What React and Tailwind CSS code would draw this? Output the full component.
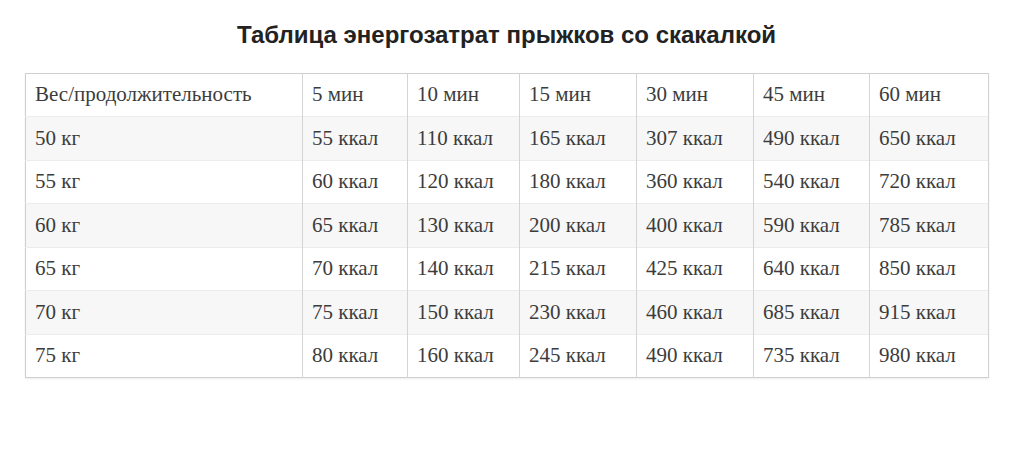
import React from "react";

const durations = ["5 мин", "10 мин", "15 мин", "30 мин", "45 мин", "60 мин"];

const rows = [
  { weight: "50 кг", values: [55, 110, 165, 307, 490, 650] },
  { weight: "55 кг", values: [60, 120, 180, 360, 540, 720] },
  { weight: "60 кг", values: [65, 130, 200, 400, 590, 785] },
  { weight: "65 кг", values: [70, 140, 215, 425, 640, 850] },
  { weight: "70 кг", values: [75, 150, 230, 460, 685, 915] },
  { weight: "75 кг", values: [80, 160, 245, 490, 735, 980] },
];

const App = () => {
  return (
    <div className="w-[1028px] h-[460px] bg-white pt-[18px] pl-[25px]">
      <div className="w-[963px]">
        <h1 className="text-center font-['Liberation_Sans',Arial,sans-serif] font-bold text-[24px] leading-[34px] text-[#222]">
          Таблица энергозатрат прыжков со скакалкой
        </h1>

        <table className="mt-[21px] w-[963px] table-fixed border-collapse border border-[#cfcfcf] shadow-[0_1px_2px_rgba(0,0,0,0.08)] font-['Liberation_Serif','Times_New_Roman',serif] text-[21px] text-[#3c3c3c]">
          <colgroup>
            <col className="w-[277px]" />
            <col className="w-[105px]" />
            <col className="w-[112px]" />
            <col className="w-[117px]" />
            <col className="w-[117px]" />
            <col className="w-[116px]" />
            <col className="w-[119px]" />
          </colgroup>
          <tbody>
            <tr className="h-[43px] bg-white">
              <td className="pl-[9px] border-r border-[#d4d4d4]">Вес/продолжительность</td>
              {durations.map((d) => (
                <td key={d} className="pl-[9px] border-r border-[#d4d4d4]">
                  {d}
                </td>
              ))}
            </tr>
            {rows.map((row, i) => (
              <tr
                key={row.weight}
                className={
                  i % 2 === 0
                    ? "h-[43.5px] bg-[#f7f7f7] border-t border-[#ececec]"
                    : "h-[43.5px] bg-white border-t border-[#ececec]"
                }
              >
                <td className="pl-[9px] border-r border-[#d4d4d4]">{row.weight}</td>
                {row.values.map((v, j) => (
                  <td key={j} className="pl-[9px] border-r border-[#d4d4d4]">
                    {v} ккал
                  </td>
                ))}
              </tr>
            ))}
          </tbody>
        </table>
      </div>
    </div>
  );
};

export default App;
